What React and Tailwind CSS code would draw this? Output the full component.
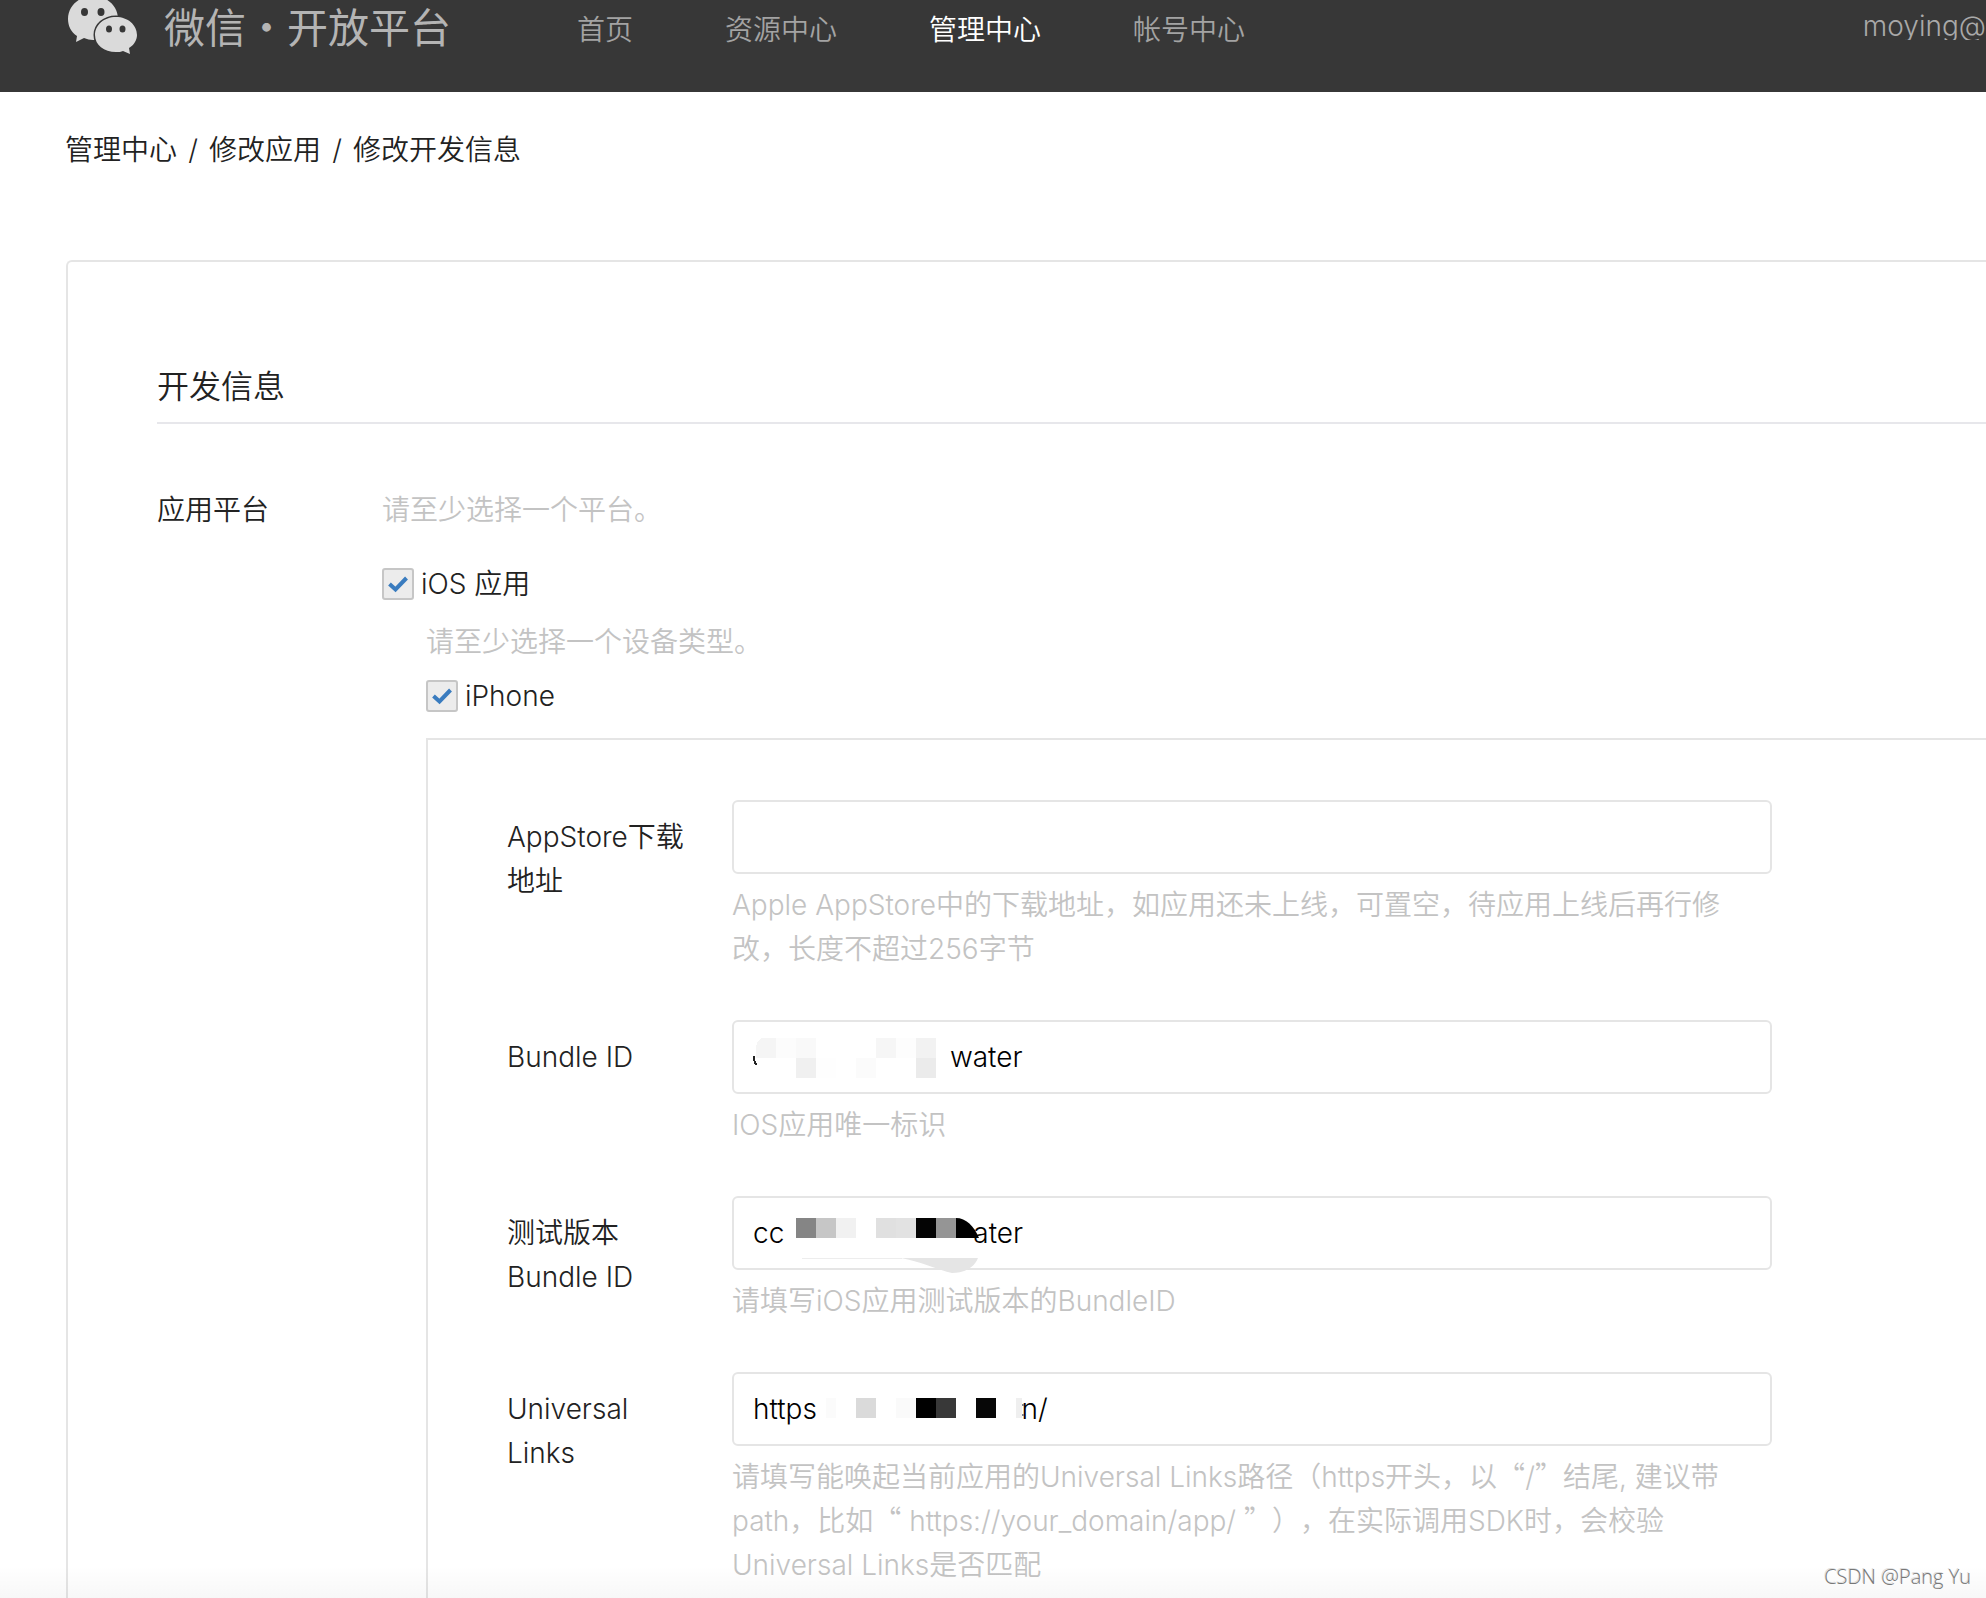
import React from "react";

const NAV = [
  { text: "首页", active: false },
  { text: "资源中心", active: false },
  { text: "管理中心", active: true },
  { text: "帐号中心", active: false },
];

const sp = (n) => "\u00a0".repeat(n);

function Logo() {
  return (
    <svg viewBox="66 0 74 56" className="h-14 w-[74px] shrink-0" aria-hidden="true">
      <path
        d="M93 -4C79 -4 68 6 68 19C68 26 71 32 77 36L76 42L84 38C87 39 90 40 93 40C107 40 118 31 118 19C118 6 107 -4 93 -4Z"
        fill="#dadada"
      />
      <path
        d="M116 17C104 17 95 25 95 35C95 45 104 52 116 52C119 52 121 52 123 51L130 54L129 48C134 45 137 40 137 35C137 25 128 17 116 17Z"
        fill="#dadada"
        stroke="#373737"
        strokeWidth="3"
        paintOrder="stroke"
      />
      <g fill="#373737">
        <ellipse cx="84.500" cy="12" rx="3.500" ry="4" />
        <ellipse cx="101" cy="12" rx="3.500" ry="4" />
        <ellipse cx="109" cy="29" rx="3" ry="3.500" />
        <ellipse cx="122.500" cy="29" rx="3" ry="3.500" />
      </g>
    </svg>
  );
}

function Check({ id, label }) {
  return (
    <div className="flex h-8 items-center gap-[7px]">
      <span className="relative size-8 shrink-0">
        <input
          id={id}
          type="checkbox"
          defaultChecked
          className="block size-8 appearance-none rounded-[3px] border-2 border-[#c6c6c6] bg-[#ececec]"
        />
        <svg viewBox="0 0 32 32" className="pointer-events-none absolute inset-0 size-8" aria-hidden="true">
          <path d="M7.500 16L13.500 21.500L24.500 10" fill="none" stroke="#3a7cbf" strokeWidth="4" />
        </svg>
      </span>
      <label htmlFor={id}>{label}</label>
    </div>
  );
}

function Blocks({ y, cells }) {
  return cells.map(([x, fill, w = 20]) => (
    <rect key={x} x={x} y={y} width={w} height="20" fill={fill} />
  ));
}

/* Pixelated patches drawn over the private part of a value; origin is the field's top left corner. */
function Mosaic({ children }) {
  return (
    <svg viewBox="0 0 340 80" className="pointer-events-none absolute left-0 top-0 h-20 w-[340px]" shapeRendering="crispEdges" aria-hidden="true">
      {children}
    </svg>
  );
}

function Field({ id, label, value = "", hint, mosaic }) {
  return (
    <div className="flex items-start gap-[34px]">
      <label htmlFor={id} className="w-[191px] shrink-0 pt-[15px]">
        {label}
      </label>
      <div className="min-w-0 max-w-[1040px] flex-1">
        <div className="relative">
          <input
            id={id}
            type="text"
            defaultValue={value}
            className="block h-[74px] w-full rounded-md border-2 border-[#e5e5e5] bg-white px-[19px] text-black outline-none"
          />
          {mosaic && <Mosaic>{mosaic}</Mosaic>}
        </div>
        <p className="mt-[9px] -mb-px text-[#c3c3c3]">{hint}</p>
      </div>
    </div>
  );
}

function Q({ children }) {
  return <span className="font-['Noto_Sans_CJK_SC',sans-serif] leading-none">{children}</span>;
}

export default function App() {
  return (
    <div
      lang="zh-CN"
      className="relative flex min-h-screen flex-col overflow-hidden bg-white font-['Inter','Noto_Sans_CJK_SC',sans-serif] text-[28px] leading-[44px] font-[350] text-[#222222] [text-spacing-trim:space-all]"
    >
      <header className="flex h-[92px] items-start overflow-hidden bg-[#373737] pl-[66px] whitespace-nowrap">
        <Logo />
        <a href="#" className="ml-6 text-[41px] leading-[56px] font-normal text-[#b4b4b4]">微信・开放平台</a>
        <nav className="ml-[126px] flex gap-[92px] leading-[60px]">
          {NAV.map((n) => (
            <a key={n.text} href="#" className={n.active ? "text-white" : "text-[#a3a3a3]"}>
              {n.text}
            </a>
          ))}
        </nav>
        <a href="#" className="ml-auto block h-10 overflow-hidden leading-[52px] text-[#a9a9a9]">moying@</a>
      </header>

      <nav className="flex pt-9 pl-[65px]">
        <a href="#">管理中心</a>
        <span className="w-8 text-center">/</span>
        <a href="#">修改应用</a>
        <span className="w-8 text-center">/</span>
        <span>修改开发信息</span>
      </nav>

      <main className="mt-[88px] ml-[66px] flex flex-1 flex-col rounded-tl-md border-t-2 border-l-2 border-[#e5e5e5] pl-[89px]">
        <h1 className="mt-[101px] border-b-2 border-[#e7e7eb] pb-[11px] text-[32px] leading-[48px]">开发信息</h1>
        <div className="mt-16 flex flex-1">
          <div className="w-[225px] shrink-0">应用平台</div>
          <div className="flex flex-1 flex-col">
            <p className="text-[#c3c3c3]">请至少选择一个平台。</p>
            <div className="mt-9">
              <Check id="ios" label="iOS 应用" />
            </div>
            <div className="ml-11 flex flex-1 flex-col">
              <p className="mt-5 text-[#c3c3c3]">请至少选择一个设备类型。</p>
              <div className="mt-4">
                <Check id="iphone" label="iPhone" />
              </div>
              <section className="mt-[26px] flex flex-1 flex-col gap-[50px] border-t-2 border-l-2 border-[#e5e5e5] pt-[60px] pb-3 pl-[79px]">
                <Field
                  id="appstore"
                  label="AppStore下载地址"
                  hint="Apple AppStore中的下载地址，如应用还未上线，可置空，待应用上线后再行修改，长度不超过256字节"
                />
                <Field
                  id="bundle"
                  label="Bundle ID"
                  value={sp(25) + "water"}
                  hint="IOS应用唯一标识"
                  mosaic={
                    <>
                      <path d="M22 36C22 40 23 43 24 45" stroke="#222222" strokeWidth="2" fill="none" />
                      <path d="M24 38V26Q26 18 32 18H44V38Z" fill="#f5f5f5" />
                      <Blocks y={18} cells={[[44, "#fcfcfc"], [64, "#f9f9f9"], [144, "#f6f6f6"], [164, "#fdfdfd"], [184, "#f2f2f2"]]} />
                      <Blocks y={38} cells={[[64, "#f0f0f0"], [84, "#fefefe"], [124, "#fbfbfb"], [184, "#ebebeb"]]} />
                    </>
                  }
                />
                <Field
                  id="test-bundle"
                  label="测试版本Bundle ID"
                  value={"cc" + sp(24) + "ater"}
                  hint="请填写iOS应用测试版本的BundleID"
                  mosaic={
                    <>
                      <Blocks
                        y={22}
                        cells={[[64, "#858585"], [84, "#c6c6c6"], [104, "#f1f1f1"], [144, "#e0e0e0"], [164, "#e2e2e2"], [184, "#040404"], [204, "#959595"]]}
                      />
                      <path d="M224 22C234 22 242 30 247 42H224Z" fill="#000000" shapeRendering="auto" />
                      <path d="M70 62H170" stroke="#ededed" />
                      <path d="M169 62H246C242 72 232 77 220 77C206 74 190 66 169 62Z" fill="#e5e5e5" shapeRendering="auto" />
                    </>
                  }
                />
                <Field
                  id="universal"
                  label="Universal Links"
                  value={"https" + sp(26) + "n/"}
                  hint={
                    <>
                      请填写能唤起当前应用的Universal Links路径（https开头，以<Q>“</Q>/<Q>”</Q>结尾, 建议带path，比如<Q>“</Q> https://your_domain/app/ <Q>”</Q>），在实际调用SDK时，会校验Universal Links是否匹配
                    </>
                  }
                  mosaic={
                    <>
                      <Blocks
                        y={26}
                        cells={[[94, "#fbfbfb", 10], [124, "#dadada"], [164, "#fafafa"], [184, "#000000"], [204, "#383838"], [244, "#070707"], [284, "#efefef", 6]]}
                      />
                      <path d="M291 32V34M291 42V44" stroke="#888888" strokeWidth="2" />
                    </>
                  }
                />
              </section>
            </div>
          </div>
        </div>
      </main>

      <div className="pointer-events-none absolute inset-x-0 bottom-0 h-8 bg-linear-to-b from-black/0 to-black/3" />
      <div className="absolute right-[15px] bottom-[7px] font-['Open_Sans',sans-serif] text-[20px] leading-[28px] font-light text-[#777777] [text-shadow:-1px_-1px_0_#dddddd]">
        CSDN @Pang Yu
      </div>
    </div>
  );
}
